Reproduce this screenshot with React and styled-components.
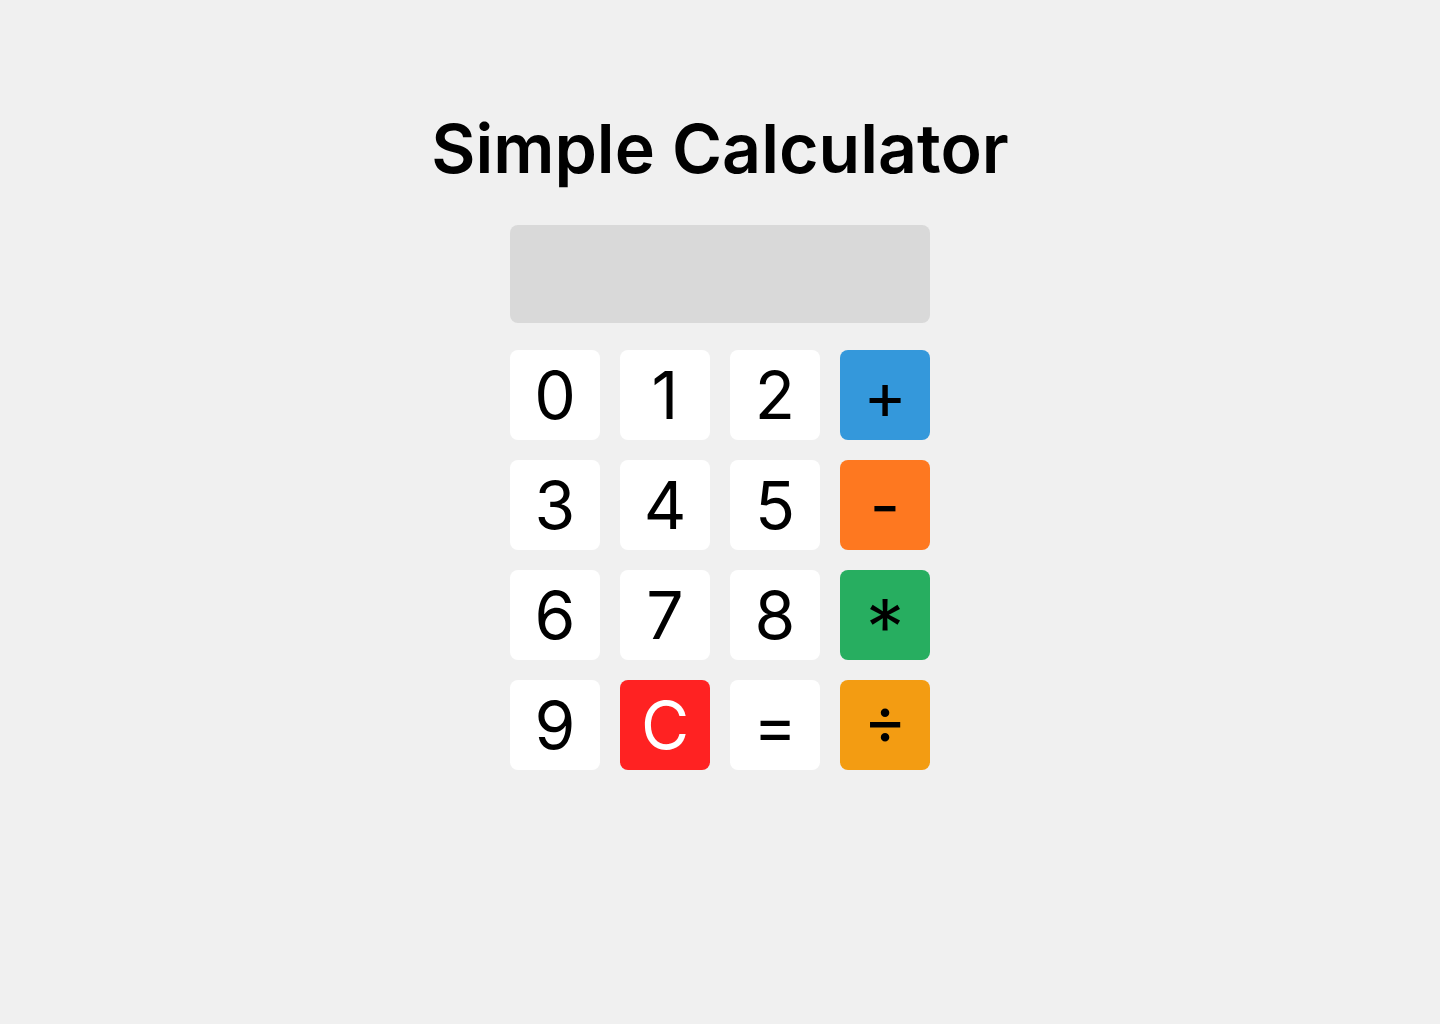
import React, { useState } from 'react';
import styled, { createGlobalStyle } from 'styled-components';

const GlobalStyle = createGlobalStyle`
  html, body {
    margin: 0;
    padding: 0;
    background: #f0f0f0;
    font-family: Inter, "Noto Sans", sans-serif;
  }
`;

const KEYS = [
  { label: '0' }, { label: '1' }, { label: '2' }, { label: '+', bg: '#3498db' },
  { label: '3' }, { label: '4' }, { label: '5' }, { label: '-', bg: '#fe7820' },
  { label: '6' }, { label: '7' }, { label: '8' }, { label: '*', bg: '#27ae60', centered: true },
  { label: '9' }, { label: 'C', bg: '#ff2222', color: '#ffffff' }, { label: '=' }, { label: '÷', bg: '#f39c12', centered: true },
];

const App = () => {
  const [value, setValue] = useState('');

  const press = (key) => {
    if (key === 'C') return setValue('');
    if (key === '=') {
      try {
        const result = Function(`return (${value.replace(/÷/g, '/')})`)();
        setValue(String(result));
      } catch (e) {
        setValue('');
      }
      return;
    }
    setValue(value + key);
  };

  return (
    <Page>
      <GlobalStyle />
      <Title>Simple Calculator</Title>
      <Display>{value}</Display>
      <Keypad>
        {KEYS.map((k) => (
          <Key
            key={k.label}
            $bg={k.bg}
            $color={k.color}
            $centered={k.centered}
            onClick={() => press(k.label)}
          >
            {k.label}
          </Key>
        ))}
      </Keypad>
    </Page>
  );
};

export default App;

const Page = styled.div`
  display: flex;
  flex-direction: column;
  align-items: center;
  padding-top: 108px;
  min-height: 1024px;
  box-sizing: border-box;
`;

const Title = styled.h1`
  margin: 0 0 37px;
  font-size: 68px;
  line-height: 80px;
  font-weight: 600;
  color: #000;
`;

const Display = styled.div`
  width: 420px;
  height: 98px;
  box-sizing: border-box;
  padding: 0 20px;
  background: #d9d9d9;
  border-radius: 8px;
  display: flex;
  align-items: center;
  justify-content: flex-end;
  font-size: 48px;
  color: #000;
  margin-bottom: 27px;
`;

const Keypad = styled.div`
  display: grid;
  grid-template-columns: repeat(4, 90px);
  grid-auto-rows: 90px;
  gap: 20px;
`;

const Key = styled.button`
  border: none;
  padding: 0;
  border-radius: 8px;
  background: ${(p) => p.$bg || '#ffffff'};
  color: ${(p) => p.$color || '#000000'};
  font-family: Inter, "Noto Sans", sans-serif;
  font-size: 66px;
  font-weight: 400;
  line-height: 1;
  font-feature-settings: ${(p) => (p.$centered ? '"case" 1' : 'normal')};
  display: flex;
  align-items: center;
  justify-content: center;
  cursor: pointer;
`;
